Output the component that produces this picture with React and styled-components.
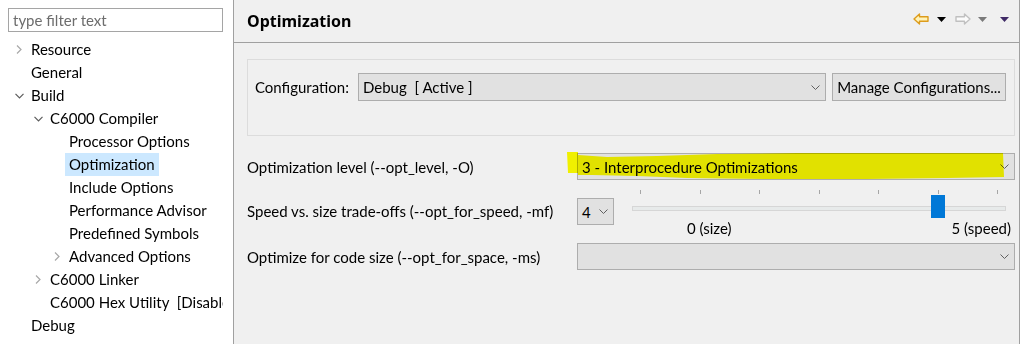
import React from 'react';
import styled, { createGlobalStyle } from 'styled-components';

const GlobalStyle = createGlobalStyle`
  body {
    margin: 0;
    font-family: 'Segoe UI', Lato, 'Noto Sans', sans-serif;
    font-size: 15px;
    color: #000;
    background: #fff;
  }
`;

const tree = [
  { label: 'Resource', level: 0, twisty: 'closed' },
  { label: 'General', level: 0 },
  { label: 'Build', level: 0, twisty: 'open' },
  { label: 'C6000 Compiler', level: 1, twisty: 'open' },
  { label: 'Processor Options', level: 2 },
  { label: 'Optimization', level: 2, selected: true },
  { label: 'Include Options', level: 2 },
  { label: 'Performance Advisor', level: 2 },
  { label: 'Predefined Symbols', level: 2 },
  { label: 'Advanced Options', level: 2, twisty: 'closed' },
  { label: 'C6000 Linker', level: 1, twisty: 'closed' },
  { label: 'C6000 Hex Utility  [Disabled]', level: 1 },
  { label: 'Debug', level: 0 },
];

const Twist = ({ kind }) => {
  if (kind === 'open') {
    return (
      <svg width="9" height="6" viewBox="0 0 9 6">
        <polyline points="0.5,0.8 4.5,4.8 8.5,0.8" fill="none" stroke="#5c5c5c" strokeWidth="1.2" />
      </svg>
    );
  }
  if (kind === 'closed') {
    return (
      <svg width="6" height="9" viewBox="0 0 6 9">
        <polyline points="1,0.5 5,4.5 1,8.5" fill="none" stroke="#a8a8a8" strokeWidth="1.2" />
      </svg>
    );
  }
  return null;
};

const ComboArrow = () => (
  <svg width="9" height="5" viewBox="0 0 9 5">
    <polyline points="0.5,0.5 4.5,4.5 8.5,0.5" fill="none" stroke="#606060" strokeWidth="1" />
  </svg>
);

const NavArrow = ({ dir, fill, stroke }) => (
  <svg width="16" height="12" viewBox="0 0 16 12" style={{ transform: dir === 'right' ? 'scaleX(-1)' : 'none' }}>
    <path d="M1 6 L6.5 1 V3.8 H15 V8.2 H6.5 V11 Z" fill={fill} stroke={stroke} strokeWidth="1.4" strokeLinejoin="round" />
  </svg>
);

const Tri = ({ color }) => (
  <svg width="9" height="5" viewBox="0 0 9 5">
    <path d="M0 0 H9 L4.5 5 Z" fill={color} />
  </svg>
);

export default function App() {
  const ticks = [0, 1, 2, 3, 4, 5, 6];
  return (
    <>
      <GlobalStyle />
      <Page>
        <Sidebar>
          <FilterInput placeholder="type filter text" />
          <Tree>
            {tree.map((n) => (
              <TreeRow key={n.label} level={n.level}>
                <Twisty>{n.twisty && <Twist kind={n.twisty} />}</Twisty>
                <TreeLabel selected={n.selected}>{n.label}</TreeLabel>
              </TreeRow>
            ))}
          </Tree>
        </Sidebar>

        <Main>
          <Header>
            <Title>Optimization</Title>
            <Toolbar>
              <NavArrow dir="left" fill="#fff3b8" stroke="#dd9c1c" />
              <ToolGap w={8} />
              <Tri color="#000" />
              <ToolGap w={9} />
              <NavArrow dir="right" fill="#fbfbfb" stroke="#c0c0c0" />
              <ToolGap w={7} />
              <Tri color="#7a7a7a" />
              <ToolGap w={13} />
              <Tri color="#3f2a66" />
            </Toolbar>
          </Header>

          <Body>
            <GroupBox>
              <ConfigRow>
                <ConfigLabel>Configuration:</ConfigLabel>
                <Combo width={468} height={28}>
                  <ComboText>Debug  [ Active ]</ComboText>
                  <ComboArrow />
                </Combo>
                <PushButton>Manage Configurations...</PushButton>
              </ConfigRow>
            </GroupBox>

            <SettingRow height={27} top={17}>
              <SettingLabel>Optimization level (--opt_level, -O)</SettingLabel>
              <ControlCell>
                <Combo height={27}>
                  <ComboText>3 - Interprocedure Optimizations</ComboText>
                  <ComboArrow />
                </Combo>
                <Marker width="440" height="32" viewBox="0 0 440 32">
                  <path
                    d="M0 1 L11 1 L11 4 L40 6 L90 5 L150 3 L230 2 L330 2 L436 2 L437 26 L380 27 L300 28 L200 28 L120 27 L70 25 L25 24 L11 24 L11 22 L1 22 Z"
                    fill="#ffff00"
                  />
                </Marker>
              </ControlCell>
            </SettingRow>

            <SettingRow height={62} top={0}>
              <SettingLabel>Speed vs. size trade-offs (--opt_for_speed, -mf)</SettingLabel>
              <SliderCell>
                <Combo width={37} height={27} offset={18}>
                  <ComboText>4</ComboText>
                  <ComboArrow />
                </Combo>
                <SliderBlock>
                  <Ticks>
                    {ticks.map((t) => (
                      <Tick key={t} />
                    ))}
                  </Ticks>
                  <Track>
                    <Thumb style={{ left: 298 }} />
                  </Track>
                  <SliderLabels>
                    <span>0 (size)</span>
                    <span>5 (speed)</span>
                  </SliderLabels>
                </SliderBlock>
              </SliderCell>
            </SettingRow>

            <SettingRow height={27} top={1}>
              <SettingLabel>Optimize for code size (--opt_for_space, -ms)</SettingLabel>
              <ControlCell>
                <Combo height={27}>
                  <ComboText />
                  <ComboArrow />
                </Combo>
              </ControlCell>
            </SettingRow>
          </Body>
        </Main>
        <Edge />
      </Page>
    </>
  );
}

const Page = styled.div`
  display: flex;
  width: 1022px;
  height: 344px;
  overflow: hidden;
`;

const Sidebar = styled.div`
  width: 234px;
  flex-shrink: 0;
  box-sizing: border-box;
  background: #fff;
  border-right: 1px solid #a0a0a0;
  padding-top: 8px;
`;

const FilterInput = styled.input`
  display: block;
  margin-left: 8px;
  width: 215px;
  height: 24px;
  box-sizing: border-box;
  border: 1px solid #a5a5a5;
  padding: 0 4px;
  font-family: inherit;
  font-size: 15px;
  outline: none;
  &::placeholder {
    color: #6d6d6d;
  }
`;

const Tree = styled.div`
  margin-top: 6px;
  width: 223px;
  overflow: hidden;
`;

const TreeRow = styled.div`
  display: flex;
  align-items: center;
  height: 23px;
  white-space: pre;
  padding-left: ${(p) => 9 + p.level * 19}px;
`;

const Twisty = styled.span`
  width: 20px;
  margin-right: 2px;
  display: flex;
  justify-content: center;
  align-items: center;
  flex-shrink: 0;
`;

const TreeLabel = styled.span`
  line-height: 23px;
  padding: 0 4px;
  margin-left: -4px;
  background: ${(p) => (p.selected ? '#cce8ff' : 'transparent')};
`;

const Main = styled.div`
  width: 785px;
  flex-shrink: 0;
  background: #f0f0f0;
  border-right: 1px solid #a0a0a0;
  display: flex;
  flex-direction: column;
`;

const Edge = styled.div`
  flex: 1;
  background: #fff;
`;

const Header = styled.div`
  height: 42px;
  border-bottom: 1px solid #a0a0a0;
  display: flex;
  align-items: center;
  justify-content: space-between;
  padding: 0 10px 0 13px;
`;

const Title = styled.div`
  font-family: 'Noto Sans', 'Open Sans', sans-serif;
  font-weight: 700;
  font-size: 16px;
`;

const Toolbar = styled.div`
  display: flex;
  align-items: center;
  margin-top: -4px;
`;

const ToolGap = styled.span`
  width: ${(p) => p.w}px;
`;

const Body = styled.div`
  padding: 16px 4px 0 13px;
`;

const GroupBox = styled.div`
  height: 77px;
  box-sizing: border-box;
  border: 1px solid #dcdcdc;
  padding: 13px 0 0 7px;
`;

const ConfigRow = styled.div`
  display: flex;
  align-items: center;
`;

const ConfigLabel = styled.span`
  width: 103px;
`;

const Combo = styled.div`
  position: relative;
  width: ${(p) => (p.width ? `${p.width}px` : '100%')};
  height: ${(p) => p.height}px;
  margin-top: ${(p) => p.offset || 0}px;
  box-sizing: border-box;
  background: #e1e1e1;
  border: 1px solid #adadad;
  display: flex;
  align-items: center;
  justify-content: space-between;
  padding: 0 5px 0 4px;
  flex-shrink: 0;
`;

const ComboText = styled.span`
  white-space: pre;
`;

const PushButton = styled.button`
  margin-left: 6px;
  width: 174px;
  height: 28px;
  background: #e1e1e1;
  border: 1px solid #adadad;
  font-family: inherit;
  font-size: 15px;
  color: #000;
  padding: 0 4px;
  white-space: nowrap;
`;

const SettingRow = styled.div`
  display: grid;
  grid-template-columns: 330px 1fr;
  align-items: center;
  height: ${(p) => p.height}px;
  margin-top: ${(p) => p.top}px;
`;

const SettingLabel = styled.span`
  white-space: nowrap;
`;

const ControlCell = styled.div`
  position: relative;
`;

const Marker = styled.svg`
  position: absolute;
  left: -10px;
  top: -2px;
  pointer-events: none;
  mix-blend-mode: multiply;
`;

const SliderCell = styled.div`
  align-self: stretch;
  display: flex;
  align-items: flex-start;
`;

const SliderBlock = styled.div`
  flex: 1;
  margin-left: 18px;
  padding-top: 10px;
`;

const Ticks = styled.div`
  display: flex;
  justify-content: space-between;
  padding: 0 17px 0 8px;
  height: 4px;
`;

const Tick = styled.span`
  width: 1px;
  height: 4px;
  background: #a6a6a6;
`;

const Track = styled.div`
  position: relative;
  margin: 12px 9px 0 0;
  height: 5px;
  box-sizing: border-box;
  background: #e7eaea;
  border: 1px solid #d6d6d6;
`;

const Thumb = styled.div`
  position: absolute;
  top: -12px;
  width: 14px;
  height: 23px;
  background: #0078d7;
`;

const SliderLabels = styled.div`
  display: flex;
  justify-content: space-between;
  margin-top: 7px;
  padding: 0 4px 0 55px;
  line-height: 20px;
`;
